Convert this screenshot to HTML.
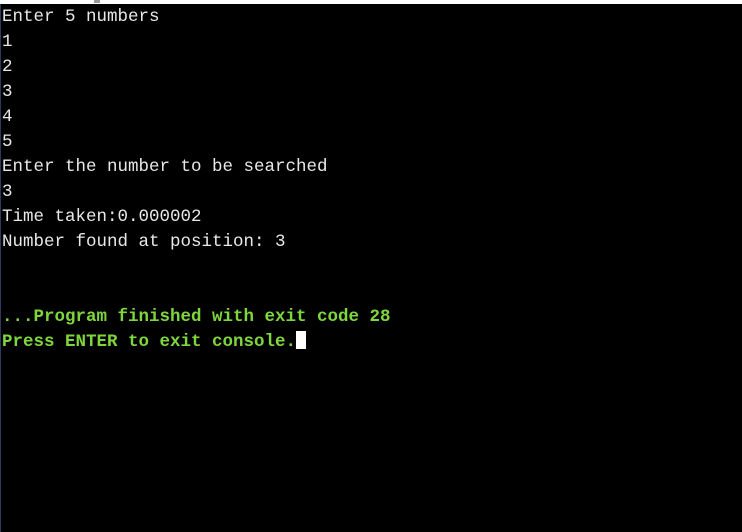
<!DOCTYPE html>
<html><head><meta charset="utf-8"><style>
html,body{margin:0;padding:0;width:742px;height:532px;overflow:hidden;background:#000}
.top{position:absolute;left:0;top:0;width:742px;height:4px;background:#fff}
.tick{position:absolute;left:94px;top:0;width:6px;height:3px;background:#999}
.left{position:absolute;left:0;top:4px;width:1px;height:528px;background:#2a3a5a}
pre{position:absolute;left:2px;top:5px;margin:0;font-family:"Liberation Mono",monospace;font-size:17.5px;line-height:25px;color:#e8e8e8}
.g{color:#7ed63c;font-weight:bold}
.cur{display:inline-block;width:10px;height:18px;background:#fff;vertical-align:-3px}
</style></head><body>
<div class="top"></div><div class="tick"></div><div class="left"></div>
<pre>Enter 5 numbers
1
2
3
4
5
Enter the number to be searched
3
Time taken:0.000002
Number found at position: 3


<span class="g">...Program finished with exit code 28</span>
<span class="g">Press ENTER to exit console.</span><span class="cur"></span></pre>
</body></html>
